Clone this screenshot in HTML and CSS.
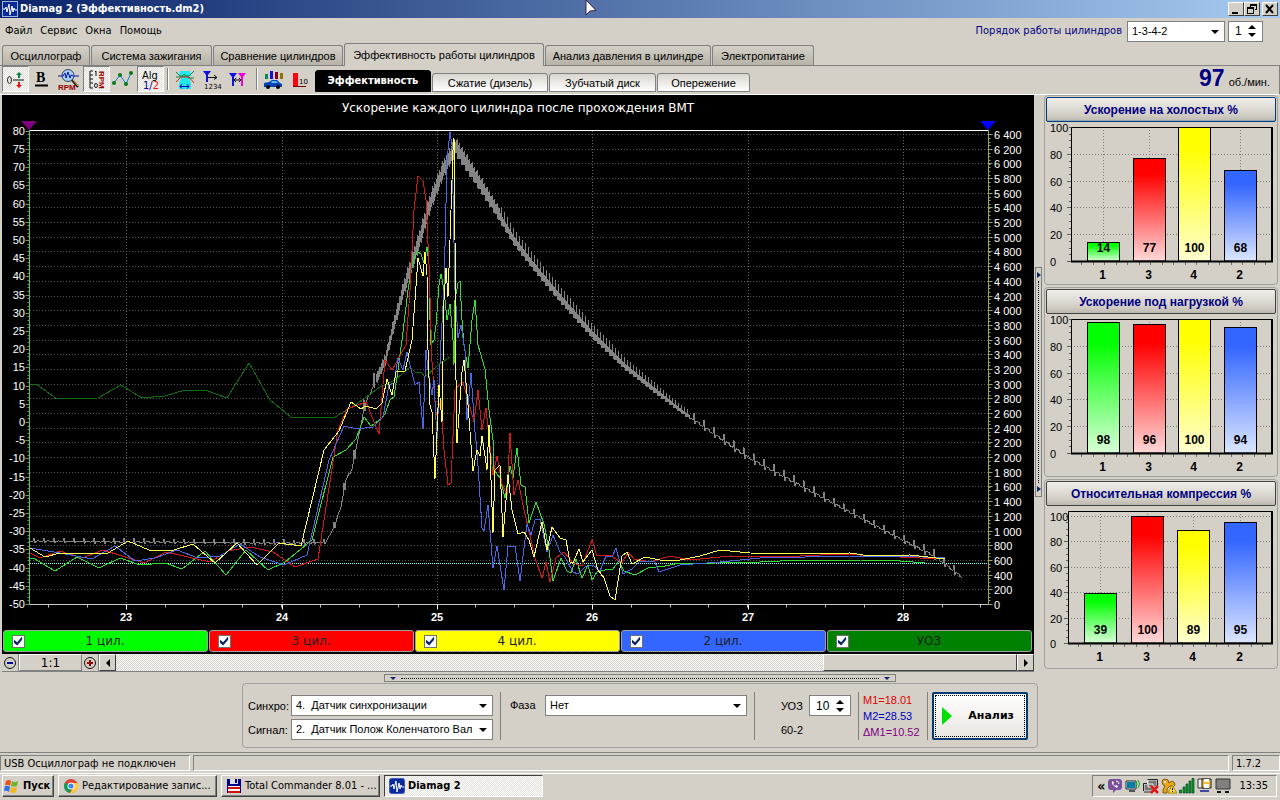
FILE: index.html
```html
<!DOCTYPE html>
<html lang="ru">
<head>
<meta charset="utf-8">
<title>Diamag 2</title>
<link rel="stylesheet" href="styles.css">
</head>
<body>
<header class="titlebar">
  <svg class="app-icon" viewBox="0 0 16 16"><rect x=".5" y=".5" width="15" height="15" fill="#0a2a9c" stroke="#9ab4e8"/><path d="M1 8h2l1-2 1 5 2-8 1 11 2-9 1 6 1-4 1 2h2" fill="none" stroke="#fff"/></svg>
  <h1 class="titlebar-text">Diamag 2 (Эффективность.dm2)</h1>
  <div class="window-buttons">
    <button class="win-btn" aria-label="Свернуть"><svg viewBox="0 0 12 10"><path d="M2 8h6v2H2z"/></svg></button>
    <button class="win-btn" aria-label="Восстановить"><svg viewBox="0 0 12 10"><path d="M4 0h7v6H9V5h1V2H5v1H4zM1 3h7v7H1zM2 5v4h5V5z" fill-rule="evenodd"/></svg></button>
    <button class="win-btn win-close" aria-label="Закрыть"><svg viewBox="0 0 12 10"><path d="M2 1l7 8M9 1L2 9" stroke="#000" stroke-width="2"/></svg></button>
  </div>
  <svg class="cursor" viewBox="0 0 12 17"><path d="M1 0v15l4-4 6-.5z" fill="#fff" stroke="#402040"/></svg>
</header>

<div class="menu-row">
  <nav class="menu">
    <a href="#">Файл</a><a href="#">Сервис</a><a href="#">Окна</a><a href="#">Помощь</a>
  </nav>
  <label class="order-label" for="order">Порядок работы цилиндров</label>
  <span class="combo combo-order"><select id="order"><option>1-3-4-2</option></select></span>
  <span class="spin"><input aria-label="Цилиндр" value="1"><span class="spin-buttons"><button class="up" aria-label="Больше"></button><button class="down" aria-label="Меньше"></button></span></span>
</div>

<nav class="tabs">
  <button class="tab tab-1">Осциллограф</button>
  <button class="tab tab-2">Система зажигания</button>
  <button class="tab tab-3">Сравнение цилиндров</button>
  <button class="tab tab-4 tab-active">Эффективность работы цилиндров</button>
  <button class="tab tab-5">Анализ давления в цилиндре</button>
  <button class="tab tab-6">Электропитание</button>
</nav>

<div class="toolbar">
  <button class="tool pressed" aria-label="Ноль"><svg viewBox="0 0 25 25"><ellipse cx="6.500" cy="13" rx="2" ry="3.500" fill="none" stroke="#222"/><path d="M10 13h11" stroke="#111"/><path d="M15 11V8h-2l3-3 3 3h-2v3z" fill="#084"/><path d="M15 15v3h-2l3 3 3-3h-2v-3z" fill="#e11"/></svg></button>
  <button class="tool" aria-label="Жирные линии"><svg viewBox="0 0 25 25"><text x="7" y="15" class="ico-b">B</text><path d="M6 18.500h13" stroke="#000" stroke-width="2"/></svg></button>
  <button class="tool" aria-label="Обороты"><svg viewBox="0 0 25 25"><circle cx="12" cy="8.500" r="6" fill="#a8ccff" stroke="#345"/><path d="M2 9h5l2-3 1 5 2-6 2 6 1-3 2 1h6" fill="none" stroke="#0018a0"/><path d="M16 13l6 7" stroke="#222" stroke-width="2.500"/><path d="M17 13l5 6" stroke="#e8a020"/><text x="2" y="23" class="ico-rpm">RPM</text></svg></button>
  <button class="tool pressed" aria-label="Шкала оборотов"><svg viewBox="0 0 25 25"><path d="M9 4H6v17h3M6 8h3M6 12h3M6 16h3M12 4v5M11 5l1-1" fill="none" stroke="#111"/><ellipse cx="12" cy="18.500" rx="1.500" ry="2" fill="none" stroke="#111"/><text class="ico-rpm" transform="translate(15 4) rotate(90)">RPM</text></svg></button>
  <button class="tool" aria-label="Точки"><svg viewBox="0 0 25 25"><path d="M4 16l6-8 6 9 5-11" fill="none" stroke="#08c"/><g fill="#087818"><circle cx="4" cy="16" r="2"/><circle cx="10" cy="8" r="2"/><circle cx="16" cy="17" r="2"/><circle cx="21" cy="6" r="2"/></g></svg></button>
  <button class="tool pressed" aria-label="Алгоритм"><svg viewBox="0 0 25 25"><text x="4" y="12" class="ico-alg">Alg</text><text x="5" y="22" class="ico-alg" fill="#009">1/<tspan fill="#e11">2</tspan></text></svg></button>
  <span class="tool-sep"></span>
  <button class="tool" aria-label="Маркеры цилиндров"><svg viewBox="0 0 25 25"><path d="M8 4h10l1 4-2 3 2 5v6H7v-6l2-5-2-3z" fill="#20e8ee"/><path d="M4 5l4 4h9l5-5M4 10h5l3-3 5 4h5" fill="none" stroke="#084"/><path d="M4 15l5-5h8l5 6" fill="none" stroke="#c31"/><path d="M8 19.500h9M10 17l-2 2.500 2 2M15 17l2 2.500-2 2" fill="none" stroke="#00a"/></svg></button>
  <button class="tool" aria-label="Нумерация"><svg viewBox="0 0 25 25"><path d="M4 4h8L9 8v7H7V8z" fill="#11d"/><path d="M9 10.500h9M15 8l3 2.500-3 2" fill="none" stroke="#111"/><text x="5" y="22" class="ico-digits">1234</text></svg></button>
  <button class="tool" aria-label="Между маркерами"><svg viewBox="0 0 25 25"><path d="M3 6h8L8 10v9H6v-9z" fill="#11d"/><path d="M12 6h8l-3 4v9h-2v-9z" fill="#e0d"/><path d="M8.500 13h6M10 11l-2 2 2 2M13 11l2 2-2 2" fill="none" stroke="#111"/></svg></button>
  <span class="tool-sep"></span>
  <button class="tool" aria-label="Автомобиль"><svg viewBox="0 0 25 25"><path d="M4 7h3v5H4z" fill="#085"/><path d="M9 4h3v8H9z" fill="#11d"/><path d="M14 5h3v7h-3z" fill="#802"/><path d="M19 6h3v6h-3z" fill="#870"/><path d="M3 16l5-1 3-2h5l3 3 2 1v3H3z" fill="#04b"/><path d="M11 14h4l2 2h-7z" fill="#6be"/><circle cx="7" cy="20" r="2"/><circle cx="17" cy="20" r="2"/></svg></button>
  <button class="tool" aria-label="Десять"><svg viewBox="0 0 25 25"><path d="M5 6h5v13H5z" fill="#f01"/><path d="M5 19.500h13" stroke="#700"/><text x="11" y="17" class="ico-digits">10</text></svg></button>
  <div class="subtabs">
    <button class="subtab subtab-on">Эффективность</button>
    <button class="subtab">Сжатие (дизель)</button>
    <button class="subtab subtab-3">Зубчатый диск</button>
    <button class="subtab subtab-4">Опережение</button>
  </div>
  <p class="rpm"><strong>97</strong> об./мин.</p>
</div>

<main class="workspace">
  <section class="scope">
    <svg id="scope-chart" class="scope-chart" viewBox="2 95 1032 534"></svg>
    <div class="legend">
      <label class="lg lg-green"><input type="checkbox" checked><span>1 цил.</span></label>
      <label class="lg lg-red"><input type="checkbox" checked><span>3 цил.</span></label>
      <label class="lg lg-yellow"><input type="checkbox" checked><span>4 цил.</span></label>
      <label class="lg lg-blue"><input type="checkbox" checked><span>2 цил.</span></label>
      <label class="lg lg-dark"><input type="checkbox" checked><span>УОЗ</span></label>
    </div>
    <div class="scroll-row">
      <button class="zoom-btn" aria-label="Уменьшить"><svg viewBox="0 0 16 16"><circle cx="8" cy="8" r="5.500" fill="none" stroke="#111"/><path d="M5 8h6" stroke="#009" stroke-width="2"/></svg></button>
      <button class="ratio">1:1</button>
      <button class="zoom-btn" aria-label="Увеличить"><svg viewBox="0 0 16 16"><circle cx="8" cy="8" r="5.500" fill="none" stroke="#111"/><path d="M5 8h6M8 5v6" stroke="#900" stroke-width="2"/></svg></button>
      <button class="scroll-btn" aria-label="Влево"><span class="arrow-left"></span></button>
      <div class="scroll-track"><div class="scroll-thumb"></div></div>
      <button class="scroll-btn" aria-label="Вправо"><span class="arrow-right"></span></button>
    </div>
  </section>
  <div class="v-split"><span class="grip-v"><i class="arrow-small"></i><i class="dots-v"></i><i class="arrow-small"></i></span></div>
  <aside class="panels">
    <section class="panel"><button class="panel-title panel-title-focus">Ускорение на холостых %</button><svg class="bars" id="bars-idle" viewBox="1046 122 230 160"></svg></section>
    <section class="panel"><button class="panel-title">Ускорение под нагрузкой %</button><svg class="bars" id="bars-load" viewBox="1046 122 230 160"></svg></section>
    <section class="panel"><button class="panel-title">Относительная компрессия %</button><svg class="bars" id="bars-comp" viewBox="1046 506 230 160"></svg></section>
  </aside>
</main>

<div class="h-split"><i class="arrow-down-small"></i><i class="dots-h"></i><i class="arrow-down-small"></i></div>

<form class="controls">
  <div class="signals">
    <label for="sync">Синхро:</label><span class="combo"><select id="sync"><option>4.&nbsp; Датчик синхронизации</option></select></span>
    <label for="signal">Сигнал:</label><span class="combo"><select id="signal"><option>2.&nbsp; Датчик Полож Коленчатого Вал</option></select></span>
  </div>
  <div class="phase"><label for="phase">Фаза</label><span class="combo"><select id="phase"><option>Нет</option></select></span></div>
  <div class="advance">
    <label for="uoz">УОЗ</label>
    <span class="spin spin-uoz"><input id="uoz" value="10"><span class="spin-buttons"><button type="button" class="up" aria-label="Больше"></button><button type="button" class="down" aria-label="Меньше"></button></span></span>
    <span class="teeth">60-2</span>
  </div>
  <div class="markers"><span class="m1">M1=18.01</span><span class="m2">M2=28.53</span><span class="md">ΔM1=10.52</span></div>
  <div class="run"><button type="button" class="analyze"><span class="play"></span><span class="analyze-text">Анализ</span></button></div>
</form>

<div class="statusbar"><span class="status status-usb">USB Осциллограф не подключен</span><span class="status status-mid"></span><span class="status status-ver">1.7.2</span></div>

<footer class="taskbar">
  <button class="task start"><svg viewBox="0 0 16 16"><path d="M2 3q3-2 5 0L6 8Q4 6 1 7z" fill="#e8501c"/><path d="M8 3q3 2 6 0l-1 5q-3 1-6 0z" fill="#6fb52c"/><path d="M1 8q3-1 5 1l-1 5q-2-2-5-1z" fill="#2f6fe0"/><path d="M7 9q3 2 6 0l-1 5q-3 2-6 0z" fill="#f5b81c"/></svg>Пуск</button>
  <button class="task"><svg viewBox="0 0 16 16"><circle cx="8" cy="8" r="7" fill="#db4437"/><path d="M8 8L2 4.500A7 7 0 0 0 7 15z" fill="#0f9d58"/><path d="M8 5h6.500A7 7 0 0 1 7 15l4-6z" fill="#ffcd40"/><circle cx="8" cy="8" r="3.500" fill="#fff"/><circle cx="8" cy="8" r="2.600" fill="#4285f4"/></svg><span>Редактирование запис...</span></button>
  <button class="task"><svg viewBox="0 0 16 16"><path d="M1 1h14v14H1z" fill="#00008c"/><path d="M4 1h8v5H4z" fill="#dde"/><path d="M9 1h2v4H9z" fill="#00008c"/><path d="M2 8h12v7H2z" fill="#fff"/><path d="M2 9h12v2H2zM2 13h12v2H2z" fill="#d01010"/></svg><span>Total Commander 8.01 - ...</span></button>
  <button class="task task-active"><svg viewBox="0 0 16 16"><rect x=".5" y=".5" width="15" height="15" rx="2" fill="#0a2a9c" stroke="#3a5ac0"/><path d="M1 8h2l1-2 1 5 2-8 1 11 2-9 1 6 1-4 1 2h2" fill="none" stroke="#fff"/></svg><span>Diamag 2</span></button>
  <div class="tray">
    <span class="chevrons">«</span>
    <svg viewBox="0 0 16 16"><path d="M4 1h8q3 0 3 3v5q0 3-3 3h-3l-3 3v-3H4q-3 0-3-3V4q0-3 3-3z" fill="#7b519d"/><path d="M5 4q-1 1 1 3t4 3l1-2-2-1-1 1-2-2 1-1-1-2z" fill="#fff"/><path d="M9 3q3 0 3 3" fill="none" stroke="#fff"/></svg>
    <svg viewBox="0 0 16 16"><path d="M1 3h10v8H1z" fill="#e8f4ff" stroke="#222"/><path d="M2 4h8v6H2z" fill="#087ca8"/><path d="M4 13h6" stroke="#555" stroke-width="2"/><path d="M11 4q2 2 0 5M13 2q3 4 0 8" fill="none" stroke="#1a1"/></svg>
    <svg viewBox="0 0 16 16"><path d="M5 2h9v7H5zM1 6h9v7H1z" fill="#777" stroke="#eee"/><path d="M4.500 1.500h10v7M.5 13V5.500H4" fill="none" stroke="#222"/><path d="M1 14h9" stroke="#222"/><path d="M8 8l7 7M15 8l-7 7" stroke="#e01818" stroke-width="2.500"/></svg>
    <svg viewBox="0 0 16 16"><path d="M1 4q0-3 3-3 4 0 4 4l3-2q3 1 3 4l-2 2-3-1-3 3v4H2v-3l2-4q-3-1-3-4z" fill="#e9a51c" stroke="#865a08"/><circle cx="4" cy="4" r="1" fill="#fff"/><path d="M11 7l5 8H7z" fill="#ffe030" stroke="#a80"/><path d="M11.500 10v2M11.500 13v1" stroke="#000"/></svg>
    <svg viewBox="0 0 16 16"><g fill="#08b010" stroke="#033" stroke-width=".7"><path d="M.5 12h2v3h-2zM4 9h2v6H4zM7 6h2v9H7zM10 3h2v12h-2zM13 .5h2V15h-2z"/></g></svg>
    <svg viewBox="0 0 16 16"><path d="M1 1h11v9H1z" fill="#eee" stroke="#333"/><path d="M5 1h9v9H5z" fill="#f3b73b" stroke="#222"/><path d="M7 1h5v3H7zM7 6h5v4H7z" fill="#fff"/><path d="M3 13h9" stroke="#44a" stroke-width="2"/></svg>
    <svg viewBox="0 0 16 16"><path d="M1 1h14v10H1z" fill="#808080" stroke="#333"/><path d="M2 14h4M10 14h4" stroke="#111" stroke-width="2"/></svg>
    <time class="clock">13:35</time>
  </div>
</footer>
<script src="charts.js"></script>
</body>
</html>
```
FILE: styles.css
```css
* { box-sizing: border-box; }
body {
  margin: 0;
  min-height: 100vh;
  display: flex;
  flex-direction: column;
  background: #d4d0c8;
  color: #000;
  font: 11px/14px "DejaVu Sans Condensed", "DejaVu Sans", sans-serif;
}
button, input, select { font: inherit; color: inherit; margin: 0; }
button { padding: 0; border: 0; background: none; }
svg { display: block; }

.titlebar {
  position: relative;
  height: 18px;
  display: flex;
  align-items: center;
  gap: 2px;
  padding: 0 2px;
  background: linear-gradient(90deg, #0a246a, #a6caf0);
}
.app-icon { width: 16px; height: 16px; }
.titlebar-text { flex: 1; margin: 0; font-size: 11px; line-height: 16px; font-weight: bold; color: #fff; }
.window-buttons { display: flex; }
.win-btn {
  width: 16px; height: 14px; padding: 1px;
  background: #d4d0c8;
  border: 1px solid; border-color: #fff #404040 #404040 #fff;
}
.win-btn svg { width: 12px; height: 10px; }
.win-close { margin-left: 2px; }
.cursor { position: absolute; left: 585px; top: 0; width: 12px; height: 17px; }

.menu-row { height: 26px; display: flex; align-items: center; padding: 0 17px 0 5px; gap: 3px; }
.menu { flex: 1; display: flex; gap: 8px; }
.menu a { color: #000; text-decoration: none; }
.order-label { color: #000080; padding-right: 2px; }
.combo { position: relative; display: block; height: 21px; border: 1px solid #808080; background: #fff; }
.combo select {
  appearance: none; display: block; width: 100%; height: 19px;
  padding: 0 16px 1px 4px; border: 0; border-radius: 0; background: none;
  font: 11px/16px "Liberation Sans", Arial, sans-serif;
}
.combo::after {
  content: ""; position: absolute; right: 5px; top: 8px;
  border: 4px solid transparent; border-top-color: #000; border-bottom: 0;
}
.combo-order { width: 98px; }
.spin { display: flex; width: 35px; height: 21px; border: 1px solid #808080; background: #fff; font: 12px/16px "Liberation Sans", Arial, sans-serif; }
.spin input { flex: 1; min-width: 0; border: 0; padding: 0 0 0 6px; background: none; }
.spin-buttons { display: flex; flex-direction: column; justify-content: center; gap: 4px; width: 14px; }
.up, .down { width: 0; height: 0; border: 4px solid transparent; }
.up { border-top: 0; border-bottom-color: #000; }
.down { border-bottom: 0; border-top-color: #000; }

.tabs { display: flex; align-items: flex-end; height: 22px; padding-left: 2px; gap: 1px; border-bottom: 1px solid #808080; font: 11px/14px "Liberation Sans", Arial, sans-serif; }
.tab {
  height: 20px; white-space: nowrap;
  border: 1px solid #808080; border-bottom: 0; border-radius: 3px 3px 0 0;
  background: linear-gradient(#d4d0c8, #b8b3a8);
}
.tab-1 { width: 88px; } .tab-2 { width: 121px; } .tab-3 { width: 130px; }
.tab-4 { width: 200px; } .tab-5 { width: 166px; } .tab-6 { width: 102px; }
.tab-active { height: 23px; margin-bottom: -1px; background: #d4d0c8; }

.toolbar { display: flex; align-items: center; height: 29px; padding: 0 9px 2px 2px; border-right: 1px solid #808080; border-bottom: 1px solid #fff; }
.tool { width: 27px; height: 26px; flex: none; }
.tool svg { width: 25px; height: 25px; }
.pressed { background: repeating-conic-gradient(#fff 0 25%, #dedbd5 0 50%) 0 0 / 2px 2px; border: 1px solid; border-color: #808080 #fff #fff #808080; }
.tool-sep { flex: none; width: 2px; height: 22px; margin: 0 3px; border-left: 1px solid #808080; border-right: 1px solid #fff; }
.ico-b { font: bold 14px "Liberation Serif", serif; }
.ico-rpm { font: bold 8px "Liberation Sans", sans-serif; fill: #900; }
.ico-alg { font: 11px "DejaVu Sans Condensed", sans-serif; }
.ico-digits { font: 7px "DejaVu Sans", sans-serif; }
.subtabs { display: flex; align-items: flex-end; align-self: flex-end; gap: 1px; flex: 1; height: 21px; font: 11px/14px "Liberation Sans", Arial, sans-serif; }
.subtab { width: 116px; height: 19px; border: 1px solid #808080; border-radius: 3px 3px 0 0; background: linear-gradient(#d8d5cd, #fff); white-space: nowrap; }
.subtab-on { height: 22px; background: #000; border-color: #000; color: #fff; font: bold 11px/14px "DejaVu Sans Condensed", sans-serif; }
.subtab-3 { width: 107px; } .subtab-4 { width: 93px; }
.rpm { margin: 0; display: flex; align-items: baseline; gap: 4px; padding-top: 2px; font: 11px/24px "Liberation Sans", Arial, sans-serif; }
.rpm strong { font-size: 23px; color: #000080; }

.workspace { display: grid; grid-template-columns: minmax(0, 1fr) 8px 234px; column-gap: 1px; padding: 0 2px; }
.scope { background: #000; }
.scope-chart { width: 100%; height: auto; }
.scope-chart text { fill: #fff; }
.legend { display: grid; grid-template-columns: repeat(5, 1fr); gap: 1px; padding: 1px 2px 2px 1px; }
.lg { display: flex; align-items: center; height: 22px; padding: 0 8px; border: 1px solid #a0a0a0; border-radius: 3px; font: 12px/16px "DejaVu Sans", sans-serif; color: #202020; }
.lg span { flex: 1; text-align: center; padding-right: 14px; }
.lg input { appearance: none; width: 13px; height: 13px; background: #fff; border: 1px solid #707070; }
.lg input::before { content: ""; display: block; width: 9px; height: 9px; margin: 1px; background: #0a246a; clip-path: polygon(0 35%, 35% 65%, 90% 0, 90% 35%, 35% 100%, 0 70%); }
.lg-green { background: #0f0; } .lg-red { background: #f00; } .lg-yellow { background: #ff0; } .lg-blue { background: #36f; } .lg-dark { background: #008000; }
.scroll-row { display: flex; height: 18px; background: #d4d0c8; border-bottom: 1px solid #808080; }
.zoom-btn { width: 17px; border-right: 1px solid #808080; }
.zoom-btn svg { width: 16px; height: 16px; }
.ratio { width: 63px; border: 1px solid; border-color: #fff #808080 #808080 #fff; font: 12px/16px "DejaVu Sans", sans-serif; }
.scroll-btn { display: grid; place-items: center; width: 17px; border: 1px solid; border-color: #fff #404040 #404040 #fff; background: #d4d0c8; }
.scroll-track { flex: 1; display: flex; justify-content: flex-end; background: repeating-conic-gradient(#fff 0 25%, #d4d0c8 0 50%) 0 0 / 2px 2px; }
.scroll-thumb { width: 21.5%; background: #d4d0c8; border: 1px solid; border-color: #fff #404040 #404040 #fff; }
.arrow-left { border: 4px solid transparent; border-left: 0; border-right-color: #000; }
.arrow-right { border: 4px solid transparent; border-right: 0; border-left-color: #000; }

.v-split { display: flex; align-items: center; }
.grip-v { display: flex; flex-direction: column; align-items: center; justify-content: space-between; width: 7px; height: 230px; margin-top: -4px; padding: 4px 0; border: 1px solid #808080; }
.arrow-small { border: 3px solid transparent; border-right: 0; border-left: 4px solid #0a246a; }
.dots-v { flex: 1; margin: 3px 0; border-left: 1px dotted #000; }
.panels { display: flex; flex-direction: column; gap: 2px; }
.panel { height: 190px; padding: 1px; border: 1px solid #a0a0a0; border-radius: 4px; }
.panel-title { display: block; width: 100%; height: 25px; border: 1px solid #404040; border-radius: 2px; background: linear-gradient(#f0eeea, #d4d0c8 70%, #bfbab0); font: bold 12px/14px "Liberation Sans", Arial, sans-serif; color: #000080; }
.panel-title-focus { border-color: #003c74; box-shadow: inset 0 -1px #8fa8bc; }
.bars { width: 100%; height: auto; }

.h-split { align-self: center; display: flex; align-items: center; width: 40%; height: 8px; margin-top: 2px; padding: 0 5px; border: 1px solid #808080; }
.arrow-down-small { border: 3px solid transparent; border-bottom: 0; border-top-color: #0a246a; }
.dots-h { flex: 1; margin: 0 5px; border-top: 1px dotted #000; }

.controls { align-self: center; display: flex; height: 65px; margin: 1px 0 4px; padding: 8px 9px 7px 5px; border: 1px solid #a0a0a0; border-radius: 4px; }
.signals { display: grid; grid-template-columns: 38px 202px; column-gap: 5px; row-gap: 3px; align-content: end; align-items: center; padding-right: 7px; border-right: 1px solid #808080; }
.signals label, .phase label, .advance { font-family: "Liberation Sans", Arial, sans-serif; }
.phase { display: flex; align-items: flex-start; gap: 10px; padding: 3px 7px 0 9px; border-right: 1px solid #808080; }
.phase label { line-height: 21px; width: 25px; }
.phase .combo { width: 202px; }
.advance { display: grid; grid-template-columns: 28px 42px; align-content: start; align-items: center; padding: 3px 7px 0 26px; border-right: 1px solid #808080; }
.spin-uoz { width: 42px; }
.teeth { padding-top: 7px; }
.markers { display: flex; flex-direction: column; justify-content: center; width: 69px; padding-left: 4px; border-right: 1px solid #808080; font: 11px/16px "Liberation Sans", Arial, sans-serif; white-space: nowrap; }
.m1 { color: #e00000; } .m2 { color: #0000c0; } .md { color: #800080; }
.run { padding-left: 4px; }
.analyze { display: flex; align-items: center; justify-content: space-between; width: 96px; height: 48px; padding: 0 12px 0 8px; border: 2px solid #003c74; border-radius: 2px; outline: 1px dotted #000; outline-offset: -4px; background: linear-gradient(#fff, #e8e6e0); }
.play { border: 9px solid transparent; border-right: 0; border-left: 10px solid #00e000; }
.analyze-text { font: bold 11px/14px "DejaVu Sans", sans-serif; }

.statusbar { display: flex; gap: 3px; height: 22px; padding: 2px 0; border-top: 1px solid #808080; border-bottom: 1px solid #fff; }
.status { border: 1px solid; border-color: #808080 #fff #fff #808080; padding: 0 3px; line-height: 16px; }
.status-usb { width: 190px; }
.status-mid { flex: 1; }
.status-ver { width: 48px; }

.taskbar { display: flex; gap: 4px; align-items: center; padding: 1px 3px 1px 2px; }
.task { display: flex; align-items: center; gap: 3px; width: 159px; height: 22px; padding: 0 0 0 4px; border: 1px solid; border-color: #fff #404040 #404040 #fff; box-shadow: inset -1px -1px #808080; white-space: nowrap; }
.task svg { flex: none; width: 16px; height: 16px; }
.start { width: 52px; padding: 0 1px; font-weight: bold; }
.task-active { border-color: #404040 #fff #fff #404040; box-shadow: none; background: repeating-conic-gradient(#fff 0 25%, #e2dfd9 0 50%) 0 0 / 2px 2px; font-weight: bold; }
.tray { display: flex; align-items: center; gap: 2px; height: 22px; margin-left: auto; padding: 0 8px 0 4px; border: 1px solid; border-color: #808080 #fff #fff #808080; }
.tray svg { width: 16px; height: 16px; }
.chevrons { font-size: 14px; font-weight: bold; }
.clock { padding-left: 6px; }
```
FILE: charts.js
```javascript
const NS = 'http://www.w3.org/2000/svg';
function add(parent, tag, attrs, text) {
  const el = document.createElementNS(NS, tag);
  for (const k in attrs) el.setAttribute(k, attrs[k]);
  if (text !== undefined) el.textContent = text;
  parent.appendChild(el);
  return el;
}

// Main acceleration chart
const scope = document.getElementById('scope-chart');
const L = 29.5, R = 988.5, T = 130.5, B = 604.5;
add(scope, 'text', { x: 518, y: 112, 'text-anchor': 'middle', style: 'font: 12px "DejaVu Sans", sans-serif' }, 'Ускорение каждого цилиндра после прохождения ВМТ');

for (let i = 0; i <= 32; i++) {
  const y = Math.round(604 - i * 14.69) + 0.5;
  if (i) add(scope, 'path', { d: `M30 ${y}H988`, stroke: '#585858', 'stroke-dasharray': '1 2' });
  add(scope, 'path', { d: `M${R} ${y}h4`, stroke: '#a0a060' });
  const s = String(i * 200);
  const label = s.length > 3 ? s.slice(0, -3) + ' ' + s.slice(-3) : s;
  add(scope, 'text', { x: 994, y: y + 4, style: 'font: 11px "Liberation Sans", sans-serif' }, label);
}
for (let i = 0; i <= 26; i++) {
  const y = Math.round(604 - i * 18.2) + 0.5;
  add(scope, 'path', { d: `M${L - 4} ${y}h4`, stroke: '#60a060' });
  add(scope, 'text', { x: 25, y: y + 3, 'text-anchor': 'end', style: 'font: 11px "Liberation Sans", sans-serif' }, -50 + i * 5);
}
for (let i = 0; i < 130; i++) add(scope, 'path', { d: `M${L - 2} ${Math.round(604 - i * 3.64) + 0.5}h2`, stroke: '#60a060' });
for (let i = 0; i < 128; i++) add(scope, 'path', { d: `M${R} ${Math.round(604 - i * 3.67) + 0.5}h2`, stroke: '#a0a060' });
for (let i = 0; i < 25; i++) {
  const x = Math.round(48 + i * 38.85) + 0.5;
  if (x < R) add(scope, 'path', { d: `M${x} ${B}v3`, stroke: '#c0c0c0' });
}
[126, 282, 437, 592, 748, 903].forEach((x, i) => {
  add(scope, 'path', { d: `M${x + 0.5} 131V604`, stroke: '#686868', 'stroke-dasharray': '1 2' });
  add(scope, 'path', { d: `M${x + 0.5} ${B}v5`, stroke: '#fff' });
  add(scope, 'text', { x: x, y: 621, 'text-anchor': 'middle', style: 'font: bold 11px "Liberation Sans", sans-serif' }, 23 + i);
});
add(scope, 'path', { d: 'M30 563.5H988', stroke: '#90ffff', 'stroke-dasharray': '1 1' });

// Engine speed: a rippled band, widest at the peak
const speed = [[30,541,2],[300,543,2],[326,542,2],[335,525,3],[341,506,4],[346,480,5],[352,468,5],[358,440,5],[364,408,5],[372,388,6],[385,360,8],[393,327,9],[403,290,10],[417,247,12],[430,203,12],[443,170,12],[455,147,11],[465,162,11],[480,185,10],[497,212,9],[513,239,8],[533,265,8],[557,294,8],[592,334,7],[627,368,6],[680,410,4],[748,457,4],[800,485,4],[850,512,3],[903,540,3],[935,556,4],[962,577,3]];
let d = '', seg = 0;
for (let x = 30; x <= 962; x++) {
  while (x > speed[seg + 1][0]) seg++;
  const a = speed[seg], b = speed[seg + 1], t = (x - a[0]) / (b[0] - a[0]);
  const y = a[1] + (b[1] - a[1]) * t, h = a[2] + (b[2] - a[2]) * t;
  if (x > 375 && x < 690) {
    const up = x > 500 ? (x % 3 === 0 ? 1.4 : 0.4) : 0.5 + ((x * 7) % 5) / 8;
    const down = 0.4 + ((x * 3) % 4) / 8;
    d += `M${x + 0.5} ${(y - h * up).toFixed(1)}V${(y + h * down).toFixed(1)}`;
  } else {
    const p = x % 10;
    d += `${x === 30 || x === 690 ? 'M' : 'L'}${x} ${(y + (p === 4 ? -h * 1.7 : p === 5 ? h : h * (0.3 - p / 20))).toFixed(1)}`;
  }
}
add(scope, 'path', { d, fill: 'none', stroke: '#848484', 'shape-rendering': 'crispEdges' });

const traces = [
  ['#107010', '30,384 36,384 57,399 98,398 121,385 142,398 165,396 185,390 205,390 227,398 249,363 270,400 291,417 335,417 355,405 380,387 395,380 410,367 416,373 421,372 425,377 438,365 450,357'],
  ['#30e030', '30,559 33,558 55,571 77,557 99,568 120,558 140,565 165,563 182,569 205,551 226,575 246,550 268,570 285,562 312,540 333,457 346,450 356,439 364,417 371,426 382,418 385,414 390,400 394,397 398,370 402,340 408,290 413,262 417,251 421,254 424,263 427,247 429,265 430,320 431,345 434,340 436,325 439,285 441,274 444,290 447,320 450,304 453,340 454,365 455,300 458,283 460,281 462,320 464,345 468,368 472,320 475,300 478,345 485,369 489,410 493,440 494,470 500,478 505,498 510,466 513,478 517,448 521,485 525,487 529,523 536,502 544,524 549,550 553,581 561,558 567,571 571,573 576,559 582,578 588,565 592,580 597,572 605,570 613,569 619,561 624,571 635,575 648,568 665,566 680,563 700,564 730,562 760,562 800,560 860,560 900,561 925,563'],
  ['#d81818', '30,553 40,558 60,551 82,558 103,550 144,563 166,552 210,562 228,551 250,547 273,552 295,567 318,559 338,430 347,409 366,402 379,434 385,360 392,370 401,354 406,345 410,290 414,210 418,176 423,181 426,200 429,265 432,362 436,415 441,400 444,450 448,485 451,483 455,390 460,384 463,382 468,400 474,422 478,390 482,430 486,408 493,475 497,456 502,484 507,495 510,433 514,495 518,480 524,510 530,535 535,558 542,578 546,562 550,582 556,558 564,552 573,563 582,566 592,540 597,556 610,555 622,563 628,552 634,559 650,562 670,556 690,560 730,556 780,557 840,554 880,556 940,559'],
  ['#4868e8', '30,548 60,553 92,559 115,546 135,561 155,558 177,550 198,558 220,556 240,544 260,557 284,565 307,555 329,460 344,426 357,429 373,427 383,417 389,385 394,383 398,358 403,370 407,352 410,365 415,385 419,382 423,429 426,350 428,370 432,395 434,380 437,440 441,340 444,290 447,160 450,132 452,145 455,290 458,338 461,325 465,350 467,420 471,373 475,432 477,450 482,528 484,531 488,505 493,568 497,546 504,590 508,546 515,546 520,581 527,524 531,535 535,520 540,519 547,552 553,535 560,552 565,557 573,572 578,574 585,567 593,565 600,571 606,556 612,557 616,548 623,574 632,569 640,561 655,562 659,572 680,565 720,562 760,558 850,556 900,556 945,558'],
  ['#ffff50', '30,548 45,557 60,553 108,553 128,541 149,550 174,550 193,544 215,563 237,543 257,565 279,543 301,546 324,450 339,431 351,402 361,409 366,406 376,409 382,403 387,379 392,395 396,372 405,371 412,340 415,300 418,258 423,276 425,252 427,275 428,350 430,405 432,412 435,479 439,385 442,422 444,300 446,268 448,297 450,240 453,150 454,138 455,240 456,380 457,443 462,372 464,360 468,405 473,471 477,450 480,456 482,436 487,470 489,425 491,480 493,533 495,470 500,465 503,537 508,475 512,510 518,534 524,532 529,540 534,557 542,522 547,550 552,527 560,538 566,540 570,562 573,563 579,549 583,562 592,550 598,570 604,578 610,596 615,600 622,556 627,552 632,564 645,557 660,560 680,560 700,556 720,550 750,553 800,554 850,553 870,556 910,555 945,559']
];
traces.forEach(([stroke, points]) => add(scope, 'polyline', { points, fill: 'none', stroke, 'shape-rendering': 'crispEdges' }));

add(scope, 'path', { d: `M${L} ${T}H${R}`, stroke: '#fff' });
add(scope, 'path', { d: `M${L} ${B}H${R}`, stroke: '#c8c8c8' });
add(scope, 'path', { d: `M${L} ${T}V${B}`, stroke: '#60c060' });
add(scope, 'path', { d: `M${R} ${T}V${B}`, stroke: '#a0a060' });
add(scope, 'path', { d: 'M21 121h16l-8 9z', fill: '#800080' });
add(scope, 'path', { d: 'M980 121h16l-8 9z', fill: '#0000ff' });

// Cylinder bar charts
function bars(id, left, top, y100, bottom, xs, values) {
  const svg = document.getElementById(id);
  const colors = ['#00ff00', '#ff0000', '#ffff00', '#3366ff'];
  const light = ['#d8ffd8', '#ffd8d8', '#ffffd0', '#dce6ff'];
  const font = 'font: 11px "Liberation Sans", sans-serif';
  const bold = 'font: bold 12px "Liberation Sans", sans-serif';
  const defs = add(svg, 'defs', {});
  const yOf = v => Math.round(bottom - (bottom - y100) * v / 100) + 0.5;
  for (let v = 0; v <= 100; v += 5) add(svg, 'path', { d: `M${left - 2} ${yOf(v)}h2`, stroke: '#606060' });
  for (let v = 0; v <= 100; v += 20) {
    if (v < 100) add(svg, 'path', { d: `M${left - 4} ${yOf(v)}h4`, stroke: '#606060' });
    if (v) add(svg, 'path', { d: `M${left} ${yOf(v)}H1272`, stroke: '#808080', 'stroke-dasharray': '1 2' });
    add(svg, 'text', { x: 1050, y: yOf(v) + 4, style: font }, v);
  }
  for (let x = left + 10; x < 1270; x += 11.5) add(svg, 'path', { d: `M${Math.round(x) + 0.5} ${bottom}v4`, stroke: '#707070' });
  xs.forEach((x, i) => {
    const g = add(defs, 'linearGradient', { id: `${id}-${i}`, x2: 0, y2: 1 });
    add(g, 'stop', { offset: 0, 'stop-color': colors[i] });
    add(g, 'stop', { offset: 0.15, 'stop-color': colors[i] });
    add(g, 'stop', { offset: 1, 'stop-color': light[i] });
    const y = yOf(values[i]);
    add(svg, 'path', { d: `M${x + 16.5} ${top}V${bottom}`, stroke: '#808080', 'stroke-dasharray': '1 2' });
    add(svg, 'rect', { x: x + 0.5, y, width: 32, height: bottom - y, fill: `url(#${id}-${i})`, stroke: '#000' });
    add(svg, 'text', { x: x + 16.5, y: bottom - 9, 'text-anchor': 'middle', style: bold }, values[i]);
    add(svg, 'text', { x: x + 15.5, y: bottom + 18, 'text-anchor': 'middle', style: bold }, [1, 3, 4, 2][i]);
  });
  add(svg, 'path', { d: `M${left + 0.5} ${bottom}V${top + 0.5}H1272`, fill: 'none', stroke: '#000' });
  add(svg, 'path', { d: `M${left} ${bottom + 0.5}H1272V${top}`, fill: 'none', stroke: '#000', 'stroke-width': 2 });
}
bars('bars-idle', 1071, 127, 127, 261, [1087, 1133, 1178, 1224], [14, 77, 100, 68]);
bars('bars-load', 1071, 127, 127, 261, [1087, 1133, 1178, 1224], [98, 96, 100, 94]);
bars('bars-comp', 1068, 511, 516, 643, [1084, 1131, 1177, 1224], [39, 100, 89, 95]);
```
